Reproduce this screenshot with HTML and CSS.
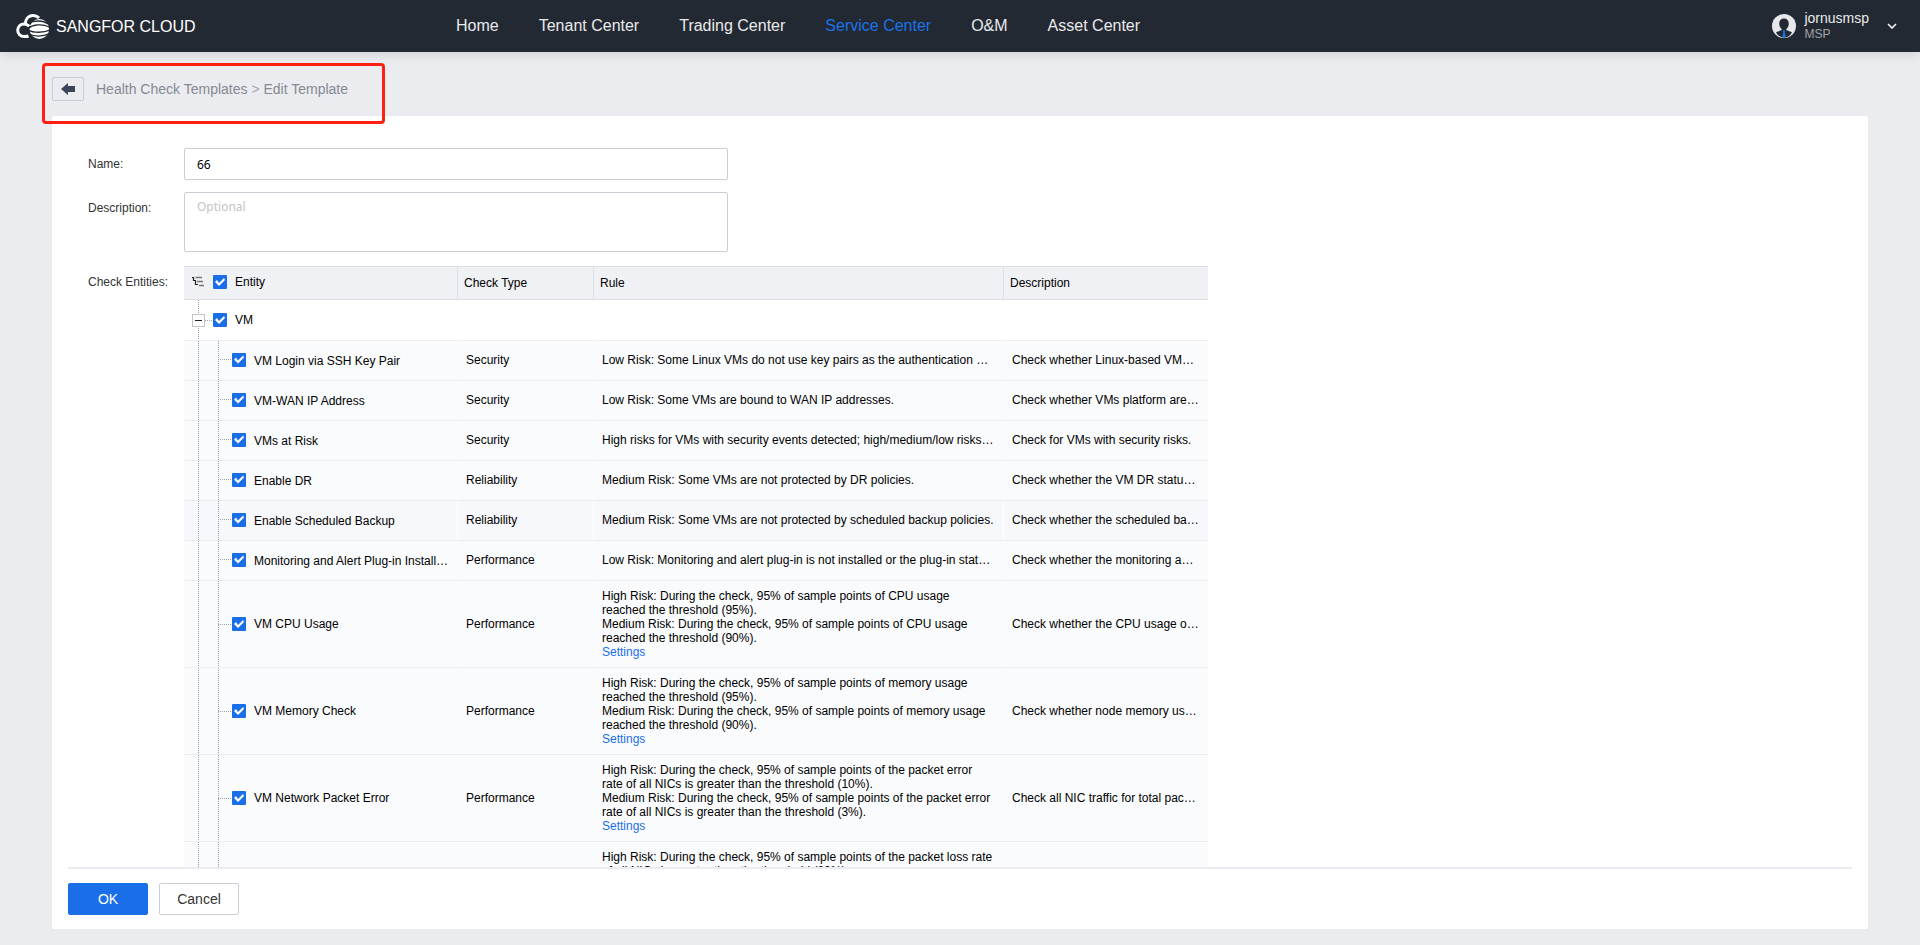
FILE: index.html
```
<!DOCTYPE html>
<html lang="en">
<head>
<meta charset="utf-8">
<title>Edit Template - Sangfor Cloud</title>
<link rel="stylesheet" href="styles.css">
</head>
<body>
<header class="topbar">
  <a class="brand" href="#">
    <svg class="brand-logo" viewBox="0 0 34 26" aria-hidden="true">
      <path d="M12.500 23C11 23.600 9.500 23.500 8 23.500C4.500 23.500 1.700 20.800 1.700 17.200C1.700 13.600 4.500 10.900 8 10.900C10.500 10.900 12 11.800 13.200 13.300" fill="none" stroke="#fff" stroke-width="3"/>
      <path d="M9.300 10C9.800 5.500 13 2.500 17 2.500C19.500 2.500 21.500 3.400 23 5" fill="none" stroke="#fff" stroke-width="3"/>
      <ellipse cx="23.300" cy="16" rx="9.800" ry="10" fill="#fff"/>
      <path d="M12 10.500C17 7.300 27 6.700 32 11" fill="none" stroke="#232933" stroke-width="1.400"/>
      <path d="M12.500 15.300C17 11.500 26 10.500 34 14.300" fill="none" stroke="#232933" stroke-width="1.200"/>
      <path d="M12 16.800C17 20 28 20 34.500 16.800" fill="none" stroke="#232933" stroke-width="1.400"/>
      <path d="M13 21C18 23.800 27 23.800 33.500 20.600" fill="none" stroke="#232933" stroke-width="1.300"/>
    </svg>
    <span class="brand-name">SANGFOR CLOUD</span>
  </a>
  <nav class="mainnav" aria-label="Main">
    <a href="#">Home</a>
    <a href="#">Tenant Center</a>
    <a href="#">Trading Center</a>
    <a class="current" href="#" aria-current="page">Service Center</a>
    <a href="#">O&amp;M</a>
    <a href="#">Asset Center</a>
  </nav>
  <button class="user" type="button">
    <svg class="avatar" viewBox="0 0 24 24" aria-hidden="true">
      <circle cx="12" cy="12" r="12" fill="#e6e7ea"/>
      <path d="M12 4.500C15 4.500 16.800 6.500 16.800 9.500C16.800 12 15.800 14 14.300 15V16L20 18.200C18.500 21.500 15.500 23.500 12 23.500C8.500 23.500 5.500 21.500 4 18.200L9.700 16V15C8.200 14 7.200 12 7.200 9.500C7.200 6.500 9 4.500 12 4.500Z" fill="#232933"/>
      <path d="M10.500 16.500H13.500L12.800 18.200L13.800 23.500H10.200L11.200 18.200Z" fill="#1a73e8"/>
    </svg>
    <span class="user-text">
      <span class="user-name">jornusmsp</span>
      <span class="user-role">MSP</span>
    </span>
    <svg class="chevron" viewBox="0 0 10 6" aria-hidden="true"><path d="M1 1L5 5L9 1" fill="none" stroke="#fff" stroke-width="1.500"/></svg>
  </button>
</header>

<main class="page">
  <div class="crumbbar">
    <button class="back" type="button" aria-label="Back">
      <svg viewBox="0 0 14 12" aria-hidden="true"><path d="M0 6L7 0V3H14V9H7V12Z" fill="#3d4459"/></svg>
    </button>
    <nav class="crumbs" aria-label="Breadcrumb"><a href="#">Health Check Templates</a> <span class="sep">&gt;</span> <span>Edit Template</span></nav>
    <div class="highlight"></div>
  </div>

  <form class="panel">
    <div class="fields">
      <div class="field">
        <label for="name">Name:</label>
        <input class="textbox" id="name" type="text" value="66">
      </div>
      <div class="field field-desc">
        <label for="desc">Description:</label>
        <textarea class="textbox" id="desc" placeholder="Optional"></textarea>
      </div>
      <div class="field">
        <span class="caption" id="entities">Check Entities:</span>
        <table class="tree" aria-labelledby="entities">
          <colgroup><col class="c-entity"><col class="c-type"><col class="c-rule"><col class="c-desc"></colgroup>
          <thead>
            <tr>
              <th><div class="node">
                <svg class="tree-icon" viewBox="0 0 12 12" aria-hidden="true"><path d="M0 1.500H2M1.500 1V4.500H4M3.500 4V8.500H6" fill="none" stroke="#222" stroke-width="1.200"/><path d="M3.500 1.500H10M5 5.500H11M7 9.500H12" fill="none" stroke="#777" stroke-width="1.400"/></svg>
                <input id="all" type="checkbox" checked><label for="all">Entity</label></div></th>
              <th>Check Type</th><th>Rule</th><th>Description</th>
            </tr>
          </thead>
          <tbody>
            <tr class="group">
              <td><div class="node"><button class="toggle" type="button" aria-label="Collapse VM"></button><span class="branch"></span><input id="vm" type="checkbox" checked><label for="vm">VM</label></div></td>
              <td></td><td></td><td></td>
            </tr>
            <tr class="brief">
              <td><div class="node"><span class="branch"></span><input id="e1" type="checkbox" checked><label for="e1">VM Login via SSH Key Pair</label></div></td>
              <td>Security</td><td>Low Risk: Some Linux VMs do not use key pairs as the authentication …</td><td>Check whether Linux-based VM…</td>
            </tr>
            <tr class="brief">
              <td><div class="node"><span class="branch"></span><input id="e2" type="checkbox" checked><label for="e2">VM-WAN IP Address</label></div></td>
              <td>Security</td><td>Low Risk: Some VMs are bound to WAN IP addresses.</td><td>Check whether VMs platform are…</td>
            </tr>
            <tr class="brief">
              <td><div class="node"><span class="branch"></span><input id="e3" type="checkbox" checked><label for="e3">VMs at Risk</label></div></td>
              <td>Security</td><td>High risks for VMs with security events detected; high/medium/low risks…</td><td>Check for VMs with security risks.</td>
            </tr>
            <tr class="brief">
              <td><div class="node"><span class="branch"></span><input id="e4" type="checkbox" checked><label for="e4">Enable DR</label></div></td>
              <td>Reliability</td><td>Medium Risk: Some VMs are not protected by DR policies.</td><td>Check whether the VM DR statu…</td>
            </tr>
            <tr class="brief hovered">
              <td><div class="node"><span class="branch"></span><input id="e5" type="checkbox" checked><label for="e5">Enable Scheduled Backup</label></div></td>
              <td>Reliability</td><td>Medium Risk: Some VMs are not protected by scheduled backup policies.</td><td>Check whether the scheduled ba…</td>
            </tr>
            <tr class="brief">
              <td><div class="node"><span class="branch"></span><input id="e6" type="checkbox" checked><label for="e6">Monitoring and Alert Plug-in Install…</label></div></td>
              <td>Performance</td><td>Low Risk: Monitoring and alert plug-in is not installed or the plug-in stat…</td><td>Check whether the monitoring a…</td>
            </tr>
            <tr>
              <td><div class="node"><span class="branch"></span><input id="e7" type="checkbox" checked><label for="e7">VM CPU Usage</label></div></td>
              <td>Performance</td>
              <td class="rules">High Risk: During the check, 95% of sample points of CPU usage reached the threshold (95%).<br>Medium Risk: During the check, 95% of sample points of CPU usage reached the threshold (90%).<br><a href="#">Settings</a></td>
              <td>Check whether the CPU usage o…</td>
            </tr>
            <tr>
              <td><div class="node"><span class="branch"></span><input id="e8" type="checkbox" checked><label for="e8">VM Memory Check</label></div></td>
              <td>Performance</td>
              <td class="rules">High Risk: During the check, 95% of sample points of memory usage reached the threshold (95%).<br>Medium Risk: During the check, 95% of sample points of memory usage reached the threshold (90%).<br><a href="#">Settings</a></td>
              <td>Check whether node memory us…</td>
            </tr>
            <tr>
              <td><div class="node"><span class="branch"></span><input id="e9" type="checkbox" checked><label for="e9">VM Network Packet Error</label></div></td>
              <td>Performance</td>
              <td class="rules">High Risk: During the check, 95% of sample points of the packet error rate of all NICs is greater than the threshold (10%).<br>Medium Risk: During the check, 95% of sample points of the packet error rate of all NICs is greater than the threshold (3%).<br><a href="#">Settings</a></td>
              <td>Check all NIC traffic for total pac…</td>
            </tr>
            <tr>
              <td></td><td></td>
              <td class="rules">High Risk: During the check, 95% of sample points of the packet loss rate of all NICs is greater than the threshold (20%).</td>
              <td></td>
            </tr>
          </tbody>
        </table>
      </div>
    </div>
    <div class="actions">
      <button class="btn btn-primary" type="submit">OK</button>
      <button class="btn" type="button">Cancel</button>
    </div>
  </form>
</main>
</body>
</html>
```
FILE: styles.css
```
* { box-sizing: border-box; }

body {
  display: flex;
  flex-direction: column;
  height: 100vh;
  margin: 0;
  background: #ebecf0;
  color: #000;
  font: 12px/14px "Liberation Sans", Arial, sans-serif;
}

a { color: inherit; text-decoration: none; }
button, input, textarea { margin: 0; padding: 0; font: inherit; color: inherit; }
button { cursor: pointer; }

/* Top bar */
.topbar {
  display: flex;
  align-items: center;
  flex: none;
  height: 52px;
  padding: 0 23px 0 16px;
  background: #232933;
  color: #e9eaeb;
  box-shadow: 0 2px 10px rgba(0, 0, 0, 0.12);
}
.brand {
  display: flex;
  align-items: center;
  gap: 6px;
  width: 440px;
  color: #fff;
  font-size: 16px;
  line-height: 18px;
}
.brand-logo { width: 34px; height: 26px; }
.brand-name { padding-top: 2px; }
.mainnav {
  display: flex;
  flex: 1;
  gap: 40px;
  font-size: 16px;
  line-height: 20px;
}
.mainnav .current { color: #1a73e8; }
.user {
  display: flex;
  align-items: center;
  border: 0;
  background: none;
  text-align: left;
}
.avatar { width: 24px; height: 24px; margin-right: 8px; }
.user-text { display: flex; flex-direction: column; margin-right: 18px; line-height: 16px; }
.user-name { font-size: 14px; }
.user-role { color: #a0a3a8; }
.chevron { width: 10px; height: 6px; }

/* Page and breadcrumb */
.page {
  display: flex;
  flex: 1;
  flex-direction: column;
  min-height: 0;
  padding: 0 52px 16px;
}
.crumbbar {
  position: relative;
  display: flex;
  align-items: center;
  gap: 12px;
  padding: 25px 0 15px;
}
.back {
  display: flex;
  align-items: center;
  justify-content: center;
  width: 32px;
  height: 24px;
  border: 1px solid #c8cdd6;
  border-radius: 2px;
  background: none;
}
.back svg { width: 14px; height: 12px; }
.crumbs { color: #858992; font-size: 14px; line-height: 20px; }
.sep { color: #a5a8af; }
.highlight {
  position: absolute;
  top: 11px;
  left: -10px;
  z-index: 1;
  width: 343px;
  height: 61px;
  border: 3px solid #ff1f14;
  border-radius: 4px;
  pointer-events: none;
}

/* Form panel */
.panel {
  display: flex;
  flex: 1;
  flex-direction: column;
  min-height: 0;
  border-radius: 3px;
  background: #fff;
}
.fields {
  flex: 1;
  min-height: 0;
  overflow: auto;
  padding: 32px 36px 0;
  scrollbar-width: none;
}
.field { display: flex; align-items: flex-start; margin-bottom: 12px; }
.field-desc { margin-bottom: 14px; }
.field > label, .caption { flex: none; width: 96px; color: #333; line-height: 32px; }
.textbox {
  display: block;
  width: 544px;
  height: 32px;
  padding: 0 12px;
  border: 1px solid #c8cdd6;
  border-radius: 2px;
  background: #fff;
  font-family: "Noto Sans", sans-serif;
}
textarea.textbox { height: 60px; padding: 5px 12px; line-height: 18px; resize: none; }
.textbox::placeholder { color: #c4c4c4; opacity: 1; }

/* Tree table */
.tree {
  width: 1024px;
  table-layout: fixed;
  border-spacing: 0;
}
.c-entity { width: 274px; }
.c-type { width: 136px; }
.c-rule { width: 410px; }
.c-desc { width: 204px; }
.tree th {
  height: 34px;
  padding: 0 6px;
  border: solid #dcdfe5;
  border-width: 1px 1px 1px 0;
  background: #f0f1f5;
  font-weight: normal;
  text-align: left;
}
.tree th:last-child { border-right: 0; }
.tree td {
  height: 40px;
  padding: 0 8px;
  border-right: 1px solid #fafbfd;
  border-bottom: 1px solid #eaecef;
  background-color: #fafbfd;
  overflow: hidden;
  text-overflow: ellipsis;
  white-space: nowrap;
}
.tree td:last-child { border-right: 0; }
.tree .group td { height: 41px; border-right-color: #fff; background-color: #fff; }
.tree .hovered td { border-right-color: #fff; background-color: #f7f8fb; }
.tree .brief td { padding-bottom: 2px; }
.tree td.rules { padding: 8px; white-space: normal; }
.rules a { color: #1a6fe8; }

.tree th:first-child { padding: 0 0 2px 8px; }
.tree td:first-child {
  padding-left: 34px;
  background-image:
    linear-gradient(#9da1ab 50%, transparent 50%),
    linear-gradient(#9da1ab 50%, transparent 50%);
  background-position: 14px 0, 34px 0;
  background-repeat: repeat-y;
  background-size: 1px 2px;
}
.tree .group td:first-child {
  padding-left: 8px;
  background-image: linear-gradient(#9da1ab 50%, transparent 50%);
  background-position: 14px 0;
}
.node { display: flex; align-items: center; }
.node label { margin-left: 8px; }
.brief .node label { padding-top: 2px; }
.tree-icon { width: 12px; height: 12px; margin-right: 9px; }
.branch {
  width: 14px;
  height: 1px;
  background: repeating-linear-gradient(90deg, #9da1ab 0 1px, transparent 1px 2px);
}
.group .branch { width: 8px; }
.toggle {
  display: flex;
  align-items: center;
  justify-content: center;
  width: 13px;
  height: 13px;
  border: 1px solid #c4c4c4;
  background: #fff;
}
.toggle::before { width: 7px; height: 1px; background: #222; content: ""; }

input[type="checkbox"] {
  flex: none;
  width: 14px;
  height: 14px;
  border-radius: 1px;
  background: #1a6fe8;
  appearance: none;
}
input[type="checkbox"]:checked::before {
  display: block;
  width: 14px;
  height: 14px;
  background: #fff;
  clip-path: polygon(2px 7px, 4px 5px, 6px 8px, 11px 3px, 12px 5px, 6px 11px);
  content: "";
}

/* Actions */
.actions {
  display: flex;
  flex: none;
  gap: 11px;
  margin: 0 16px;
  padding: 14px 0;
  border-top: 2px solid #ebecf2;
}
.btn {
  width: 80px;
  height: 32px;
  border: 1px solid #c8cdd6;
  border-radius: 2px;
  background: #fff;
  color: #333;
  font-size: 14px;
}
.btn-primary { border-color: #1a6fe8; background: #1a6fe8; color: #fff; }
```
